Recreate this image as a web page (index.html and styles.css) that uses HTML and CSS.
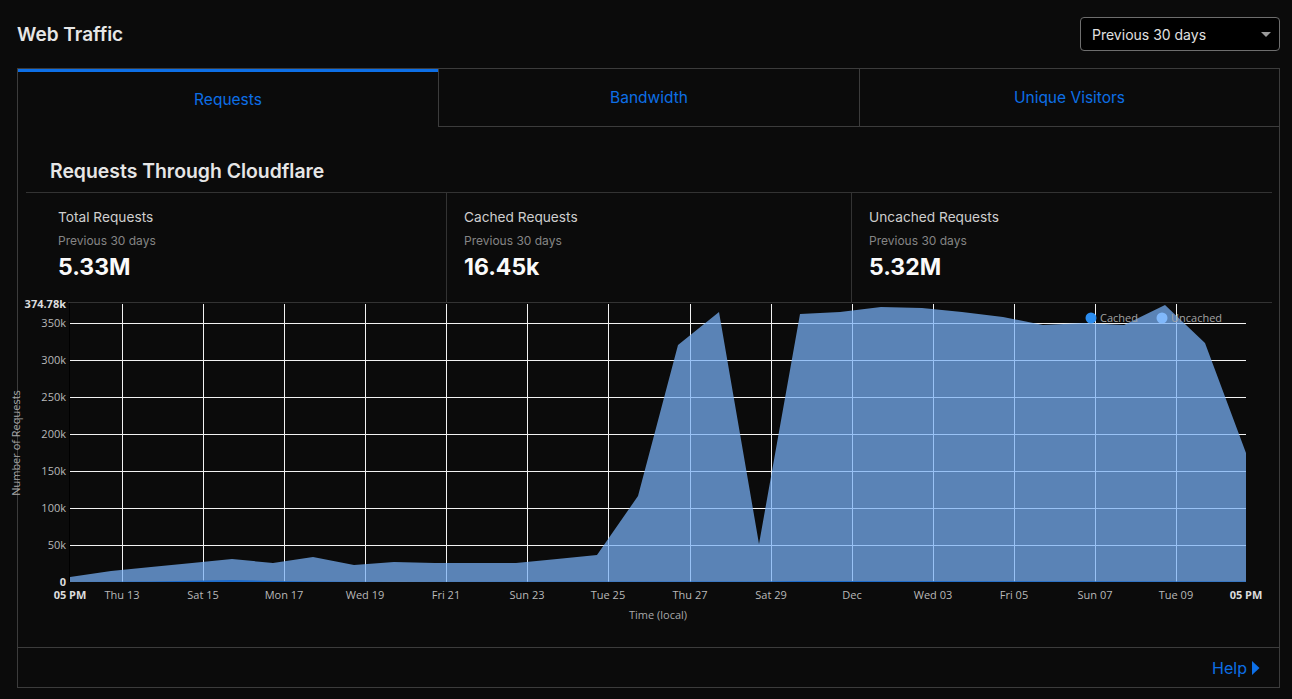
FILE: index.html
```html
<!DOCTYPE html>
<html lang="en">
<head>
    <meta charset="UTF-8">
    <title>Web Traffic</title>
    <link rel="stylesheet" href="styles.css">
</head>
<body>
    <main class="page">
        <header class="page-header">
            <h1 class="page-title">Web Traffic</h1>
            <div class="range-select">
                <span>Previous 30 days</span>
                <span class="caret"></span>
            </div>
        </header>

        <section class="panel">
            <nav class="tabs">
                <a class="tab active">Requests</a>
                <a class="tab">Bandwidth</a>
                <a class="tab">Unique Visitors</a>
            </nav>

            <div class="panel-body">
                <h2 class="section-title">Requests Through Cloudflare</h2>

                <div class="stats">
                    <div class="stat">
                        <div class="stat-label">Total Requests</div>
                        <div class="stat-period">Previous 30 days</div>
                        <div class="stat-value">5.33M</div>
                    </div>
                    <div class="stat">
                        <div class="stat-label">Cached Requests</div>
                        <div class="stat-period">Previous 30 days</div>
                        <div class="stat-value">16.45k</div>
                    </div>
                    <div class="stat">
                        <div class="stat-label">Uncached Requests</div>
                        <div class="stat-period">Previous 30 days</div>
                        <div class="stat-value">5.32M</div>
                    </div>
                </div>

                <svg class="chart" width="1246" height="345" viewBox="26 302 1246 345">
                    <!-- top rule -->
                    <line x1="26" y1="302.5" x2="1272" y2="302.5" class="rule"/>

                    <!-- horizontal grid -->
                    <g class="grid">
                        <line x1="70" y1="323.5" x2="1246" y2="323.5"/>
                        <line x1="70" y1="360.5" x2="1246" y2="360.5"/>
                        <line x1="70" y1="397.5" x2="1246" y2="397.5"/>
                        <line x1="70" y1="434.5" x2="1246" y2="434.5"/>
                        <line x1="70" y1="471.5" x2="1246" y2="471.5"/>
                        <line x1="70" y1="508.5" x2="1246" y2="508.5"/>
                        <line x1="70" y1="545.5" x2="1246" y2="545.5"/>
                    </g>
                    <!-- vertical grid -->
                    <g class="grid">
                        <line x1="122.5" y1="304" x2="122.5" y2="582"/>
                        <line x1="203.5" y1="304" x2="203.5" y2="582"/>
                        <line x1="284.5" y1="304" x2="284.5" y2="582"/>
                        <line x1="365.5" y1="304" x2="365.5" y2="582"/>
                        <line x1="446.5" y1="304" x2="446.5" y2="582"/>
                        <line x1="527.5" y1="304" x2="527.5" y2="582"/>
                        <line x1="608.5" y1="304" x2="608.5" y2="582"/>
                        <line x1="690.5" y1="304" x2="690.5" y2="582"/>
                        <line x1="771.5" y1="304" x2="771.5" y2="582"/>
                        <line x1="852.5" y1="304" x2="852.5" y2="582"/>
                        <line x1="933.5" y1="304" x2="933.5" y2="582"/>
                        <line x1="1014.5" y1="304" x2="1014.5" y2="582"/>
                        <line x1="1095.5" y1="304" x2="1095.5" y2="582"/>
                        <line x1="1176.5" y1="304" x2="1176.5" y2="582"/>
                    </g>
                    <line x1="69.5" y1="303" x2="69.5" y2="582" class="axis"/>

                    <!-- uncached -->
                    <polygon class="area-uncached" points="70,582 70,577 111,571 151,567 192,563 232,559 273,563 313,557 354,565 394,562 435,563 476,563 516,563 557,559 597,555 638,496 678,345 719,312 759,544 800,314 840,312 881,307 922,308 962,312 1003,317 1043,325 1084,323 1124,325 1165,305 1205,343 1246,453 1246,582"/>
                    <!-- cached -->
                    <polygon class="area-cached" points="70,582 151,581.5 232,580 273,581 313,581.5 394,582 759,581.5 800,581 1246,581.5 1246,582"/>

                    <!-- y axis -->
                    <g class="tick-y">
                        <rect x="24" y="297" width="44" height="12" class="label-bg"/>
                        <text x="66" y="308" class="strong">374.78k</text>
                        <text x="66" y="327">350k</text>
                        <text x="66" y="364">300k</text>
                        <text x="66" y="401">250k</text>
                        <text x="66" y="438">200k</text>
                        <text x="66" y="475">150k</text>
                        <text x="66" y="512">100k</text>
                        <text x="66" y="549">50k</text>
                        <text x="66" y="586" class="strong">0</text>
                    </g>
                    <text x="17" y="443" class="axis-title" transform="rotate(-90 17 443)">Number of Requests</text>

                    <!-- x axis -->
                    <g class="tick-x">
                        <text x="70" y="599" class="strong">05 PM</text>
                        <text x="122" y="599">Thu 13</text>
                        <text x="203" y="599">Sat 15</text>
                        <text x="284" y="599">Mon 17</text>
                        <text x="365" y="599">Wed 19</text>
                        <text x="446" y="599">Fri 21</text>
                        <text x="527" y="599">Sun 23</text>
                        <text x="608" y="599">Tue 25</text>
                        <text x="690" y="599">Thu 27</text>
                        <text x="771" y="599">Sat 29</text>
                        <text x="852" y="599">Dec</text>
                        <text x="933" y="599">Wed 03</text>
                        <text x="1014" y="599">Fri 05</text>
                        <text x="1095" y="599">Sun 07</text>
                        <text x="1176" y="599">Tue 09</text>
                        <text x="1246" y="599" class="strong">05 PM</text>
                    </g>
                    <text x="658" y="619" class="axis-label">Time (local)</text>

                    <!-- legend -->
                    <g class="legend">
                        <circle cx="1091" cy="318" r="5.5" fill="#2b8df0"/>
                        <text x="1100" y="322">Cached</text>
                        <circle cx="1162" cy="318" r="5.5" fill="#80b8fb"/>
                        <text x="1171" y="322">Uncached</text>
                    </g>
                </svg>
            </div>

            <footer class="panel-footer">
                <a class="help-link">Help
                    <svg width="9" height="14" viewBox="0 0 9 14"><path d="M1 0 L8.5 7 L1 14 Z" fill="currentColor"/></svg>
                </a>
            </footer>
        </section>
    </main>
</body>
</html>
```

FILE: styles.css
```css
/* base */
* {
    margin: 0;
    padding: 0;
    box-sizing: border-box;
}

body {
    background: #0b0b0b;
    color: #e4e4e4;
    font-family: 'Inter', 'Liberation Sans', sans-serif;
}

.page {
    padding: 17px 12px 0 17px;
}

/* header */
.page-header {
    display: flex;
    justify-content: space-between;
    align-items: center;
    height: 34px;
    margin-bottom: 17px;
}

.page-title {
    font-size: 19px;
    font-weight: 600;
    color: #e6e6e6;
}

.range-select {
    width: 200px;
    height: 34px;
    display: flex;
    align-items: center;
    justify-content: space-between;
    padding: 0 8px 0 11px;
    background: #000;
    border: 1px solid #6e6e6e;
    border-radius: 4px;
    font-size: 14px;
    color: #e0e0e0;
}

.caret {
    width: 0;
    height: 0;
    border-left: 5px solid transparent;
    border-right: 5px solid transparent;
    border-top: 5px solid #9a9a9a;
}

/* panel + tabs */
.panel {
    border: 1px solid #3c3c3c;
    height: 620px;
    display: flex;
    flex-direction: column;
}

.tabs {
    display: grid;
    grid-template-columns: 420px 421px 1fr;
    height: 58px;
}

.tab {
    display: flex;
    align-items: center;
    justify-content: center;
    padding-bottom: 1px;
    font-size: 15.5px;
    color: #0d6fe6;
    border-bottom: 1px solid #3c3c3c;
    border-left: 1px solid #3c3c3c;
}

.tab.active {
    border-left: none;
    border-bottom: none;
    border-top: 3px solid #0d6fe6;
}

.panel-body {
    padding: 0 7px 0 8px;
    flex: 1;
}

.section-title {
    font-size: 19.4px;
    font-weight: 600;
    line-height: 28px;
    padding: 30px 24px 7px;
    color: #e6e6e6;
}

/* summary numbers */
.stats {
    display: grid;
    grid-template-columns: 420px 405px 1fr;
    height: 110px;
    border-top: 1px solid #333;
}

.stat {
    padding: 14px 17px 0;
    border-left: 1px solid #333;
}

.stat:first-child {
    border-left: none;
    padding-left: 32px;
}

.stat-label {
    font-size: 13.7px;
    line-height: 20px;
    color: #cfcfcf;
}

.stat-period {
    font-size: 12px;
    line-height: 16px;
    margin-top: 6px;
    color: #858585;
}

.stat-value {
    font-size: 23px;
    font-weight: 700;
    line-height: 30px;
    margin-top: 3px;
    color: #fafafa;
}

/* chart */
.chart {
    display: block;
    overflow: visible;
    font-family: 'Open Sans', 'DejaVu Sans', sans-serif;
    font-size: 11px;
}

.chart .rule {
    stroke: #333;
}

.chart .grid line {
    stroke: #f2f2f2;
    stroke-width: 1;
}

.chart .axis {
    stroke: #000;
}

.area-uncached {
    fill: rgba(119, 176, 246, 0.73);
}

.area-cached {
    fill: #1d6ccc;
}

.label-bg {
    fill: #0b0b0b;
}

.tick-y text {
    text-anchor: end;
    fill: #b9b9b9;
}

.tick-x text {
    text-anchor: middle;
    fill: #b9b9b9;
}

.chart .strong {
    font-weight: 700;
    fill: #dcdcdc;
}

.axis-title,
.axis-label {
    text-anchor: middle;
    fill: #a9a9a9;
    font-size: 11px;
}

.axis-title {
    dominant-baseline: middle;
}

.legend text {
    fill: #a3a3a3;
}

/* footer */
.panel-footer {
    border-top: 1px solid #3c3c3c;
    height: 40px;
    display: flex;
    align-items: center;
    justify-content: flex-end;
    padding-right: 19px;
}

.help-link {
    display: flex;
    align-items: center;
    gap: 4px;
    font-size: 16px;
    color: #0d6fe6;
}
```
